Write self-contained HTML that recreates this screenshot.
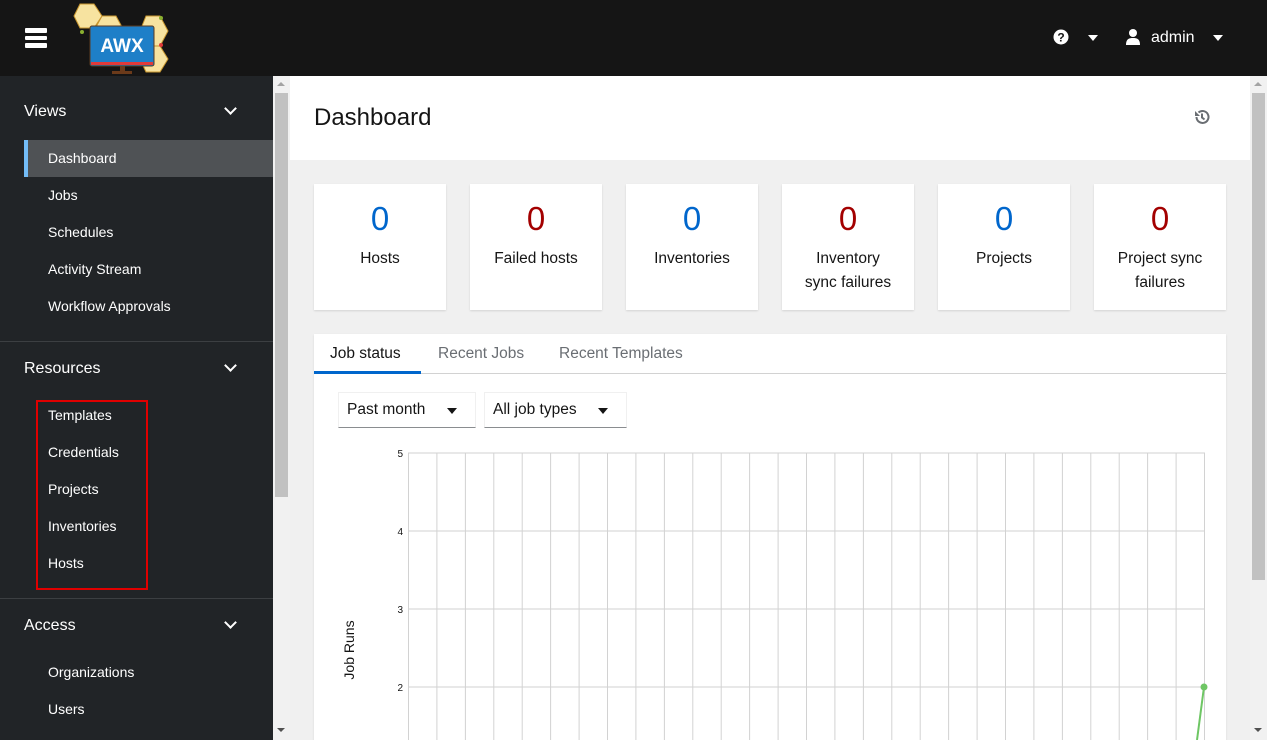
<!DOCTYPE html>
<html><head><meta charset="utf-8"><style>
*{box-sizing:border-box;margin:0;padding:0}
body{width:1267px;height:740px;overflow:hidden;font-family:"Liberation Sans",sans-serif;background:#f0f0f0;position:relative}
.a{position:absolute}
#hdr{left:0;top:0;width:1267px;height:76px;background:#151515}
#side{left:0;top:76px;width:273px;height:664px;background:#212427;color:#fff}
.sec{position:absolute;left:24px;font-size:16px;color:#fff}
.chev{position:absolute;left:226px;width:9px;height:9px;border-right:2.5px solid #fff;border-bottom:2.5px solid #fff;transform:rotate(45deg)}
.it{position:absolute;left:48px;font-size:14px;color:#fff}
.div{position:absolute;left:0;width:273px;height:1px;background:#3c3f42}
.card{position:absolute;top:184px;width:132px;height:126px;background:#fff;box-shadow:0 1px 2px rgba(0,0,0,.12);text-align:center}
.card .n{position:absolute;top:16px;left:0;width:100%;font-size:33px;font-weight:300}
.card .l{position:absolute;top:63px;left:0;width:100%;font-size:15.5px;color:#151515;line-height:24px}
.blue{color:#0066cc}.red{color:#a30000}
.sel{position:absolute;top:392px;height:36px;background:#fff;border:1px solid #f0f0f0;border-bottom:1px solid #8a8d90;font-size:15.5px;color:#151515;padding:8px 0 0 8px}
.tri{position:absolute;top:15px;width:0;height:0;border-left:5px solid transparent;border-right:5px solid transparent;border-top:6px solid #151515}
</style></head><body>
<div id="hdr" class="a">
  <div class="a" style="left:25px;top:28px;width:22px;height:4.5px;background:#fff;border-radius:1px"></div>
  <div class="a" style="left:25px;top:35.5px;width:22px;height:4.5px;background:#fff;border-radius:1px"></div>
  <div class="a" style="left:25px;top:43px;width:22px;height:4.5px;background:#fff;border-radius:1px"></div>
  <svg class="a" style="left:72px;top:2px" width="100" height="72" viewBox="0 0 100 72">
    <g fill="#f7e3a0" stroke="#c8962e" stroke-width="1">
      <polygon points="8,2 22,2 30,14 22,26 8,26 2,14"/>
      <polygon points="30,14 44,14 50,25 44,36 30,36 24,25"/>
      <polygon points="74,14 88,14 96,29 88,44 74,44 68,29"/>
      <polygon points="74,44 88,44 96,57 88,70 74,70 68,57"/>
    </g>
    <rect x="18" y="24" width="64" height="40" rx="2" fill="#1e7fc8" stroke="#5a3a20" stroke-width="1"/>
    <rect x="19" y="60" width="62" height="3" fill="#e03a3a"/>
    <rect x="48" y="64" width="5" height="5" fill="#6b3a1a"/><rect x="40" y="69" width="20" height="3" fill="#6b3a1a"/>
    <text x="50" y="50" text-anchor="middle" font-family="Liberation Sans" font-weight="bold" font-size="19" fill="#fff">AWX</text>
    <circle cx="89" cy="16" r="2" fill="#8ab030"/><circle cx="10" cy="30" r="2" fill="#8ab030"/><circle cx="89" cy="43" r="2" fill="#e03a3a"/>
  </svg>
  <svg class="a" style="left:1053px;top:29px" width="16" height="16" viewBox="0 0 16 16"><circle cx="8" cy="8" r="7.5" fill="#fff"/><text x="8" y="12.5" text-anchor="middle" font-size="12" font-weight="bold" fill="#151515" font-family="Liberation Sans">?</text></svg>
  <div class="a" style="left:1088px;top:35px;border-left:5px solid transparent;border-right:5px solid transparent;border-top:6px solid #fff"></div>
  <svg class="a" style="left:1126px;top:29px" width="14" height="16" viewBox="0 0 14 16"><circle cx="7" cy="4" r="4" fill="#fff"/><path d="M0 16 C0 10 3 9 7 9 C11 9 14 10 14 16Z" fill="#fff"/></svg>
  <div class="a" style="left:1151px;top:29px;font-size:16px;color:#fff">admin</div>
  <div class="a" style="left:1213px;top:35px;border-left:5px solid transparent;border-right:5px solid transparent;border-top:6px solid #fff"></div>
</div>
<div id="side" class="a">
  <div class="sec" style="top:27px">Views</div><div class="chev" style="top:28px"></div>
  <div class="a" style="left:24px;top:64px;width:249px;height:37px;background:#4f5255;border-left:4px solid #73bcf7"></div>
  <div class="it" style="top:74px">Dashboard</div>
  <div class="it" style="top:111px">Jobs</div>
  <div class="it" style="top:148px">Schedules</div>
  <div class="it" style="top:185px">Activity Stream</div>
  <div class="it" style="top:222px">Workflow Approvals</div>
  <div class="div" style="top:265px"></div>
  <div class="sec" style="top:284px">Resources</div><div class="chev" style="top:285px"></div>
  <div class="it" style="top:331px">Templates</div>
  <div class="it" style="top:368px">Credentials</div>
  <div class="it" style="top:405px">Projects</div>
  <div class="it" style="top:442px">Inventories</div>
  <div class="it" style="top:479px">Hosts</div>
  <div class="a" style="left:36px;top:324px;width:112px;height:190px;border:2px solid #e00000"></div>
  <div class="div" style="top:522px"></div>
  <div class="sec" style="top:541px">Access</div><div class="chev" style="top:542px"></div>
  <div class="it" style="top:588px">Organizations</div>
  <div class="it" style="top:625px">Users</div>
</div>
<div class="a" style="left:273px;top:76px;width:17px;height:664px;background:#f1f1f1"></div>
<div class="a" style="left:275px;top:93px;width:13px;height:404px;background:#c1c1c1"></div>
<div class="a" style="left:277px;top:82px;border-left:4px solid transparent;border-right:4px solid transparent;border-bottom:4px solid #a3a3a3"></div>
<div class="a" style="left:277px;top:728px;border-left:4px solid transparent;border-right:4px solid transparent;border-top:4px solid #505050"></div>
<div class="a" style="left:1250px;top:76px;width:17px;height:664px;background:#f1f1f1"></div>
<div class="a" style="left:1252px;top:93px;width:13px;height:487px;background:#c1c1c1"></div>
<div class="a" style="left:1254px;top:82px;border-left:4px solid transparent;border-right:4px solid transparent;border-bottom:4px solid #a3a3a3"></div>
<div class="a" style="left:1254px;top:728px;border-left:4px solid transparent;border-right:4px solid transparent;border-top:4px solid #505050"></div>

<div class="a" style="left:290px;top:76px;width:960px;height:84px;background:#fff"></div>
<div class="a" style="left:314px;top:104px;font-size:24px;color:#151515">Dashboard</div>
<svg class="a" style="left:1193px;top:108px" width="18" height="18" viewBox="0 0 18 18"><path d="M3.5 9 A6 6 0 1 0 5.5 4.5" fill="none" stroke="#6a6e73" stroke-width="2"/><path d="M2 3 L2 8 L7 8Z" fill="#6a6e73"/><path d="M9 5.5 V9.5 L11.5 11.5" fill="none" stroke="#6a6e73" stroke-width="2"/></svg>

<div class="card" style="left:314px"><div class="n blue">0</div><div class="l">Hosts</div></div>
<div class="card" style="left:470px"><div class="n red">0</div><div class="l">Failed hosts</div></div>
<div class="card" style="left:626px"><div class="n blue">0</div><div class="l">Inventories</div></div>
<div class="card" style="left:782px"><div class="n red">0</div><div class="l">Inventory<br>sync failures</div></div>
<div class="card" style="left:938px"><div class="n blue">0</div><div class="l">Projects</div></div>
<div class="card" style="left:1094px"><div class="n red">0</div><div class="l">Project sync<br>failures</div></div>

<div class="a" style="left:314px;top:334px;width:912px;height:406px;background:#fff;box-shadow:0 1px 2px rgba(0,0,0,.1)"></div>
<div class="a" style="left:314px;top:373px;width:912px;height:1px;background:#d2d2d2"></div>
<div class="a" style="left:314px;top:371px;width:107px;height:3px;background:#0066cc"></div>
<div class="a" style="left:330px;top:345px;font-size:15.5px;color:#151515">Job status</div>
<div class="a" style="left:438px;top:345px;font-size:15.5px;color:#6a6e73">Recent Jobs</div>
<div class="a" style="left:559px;top:345px;font-size:15.5px;color:#6a6e73">Recent Templates</div>
<div class="sel" style="left:338px;width:138px">Past month<div class="tri" style="left:108px"></div></div>
<div class="sel" style="left:484px;width:143px">All job types<div class="tri" style="left:113px"></div></div>

<svg class="a" style="left:314px;top:440px" width="912" height="300">
<g stroke="#d2d2d2" stroke-width="1">
<line x1="94" y1="13" x2="891" y2="13"/><line x1="94" y1="91" x2="891" y2="91"/><line x1="94" y1="169" x2="891" y2="169"/><line x1="94" y1="247" x2="891" y2="247"/>
<line x1="94.5" y1="13" x2="94.5" y2="300"/><line x1="122.9" y1="13" x2="122.9" y2="300"/><line x1="151.4" y1="13" x2="151.4" y2="300"/><line x1="179.8" y1="13" x2="179.8" y2="300"/><line x1="208.2" y1="13" x2="208.2" y2="300"/><line x1="236.6" y1="13" x2="236.6" y2="300"/><line x1="265.1" y1="13" x2="265.1" y2="300"/><line x1="293.5" y1="13" x2="293.5" y2="300"/><line x1="321.9" y1="13" x2="321.9" y2="300"/><line x1="350.4" y1="13" x2="350.4" y2="300"/><line x1="378.8" y1="13" x2="378.8" y2="300"/><line x1="407.2" y1="13" x2="407.2" y2="300"/><line x1="435.6" y1="13" x2="435.6" y2="300"/><line x1="464.1" y1="13" x2="464.1" y2="300"/><line x1="492.5" y1="13" x2="492.5" y2="300"/><line x1="520.9" y1="13" x2="520.9" y2="300"/><line x1="549.4" y1="13" x2="549.4" y2="300"/><line x1="577.8" y1="13" x2="577.8" y2="300"/><line x1="606.2" y1="13" x2="606.2" y2="300"/><line x1="634.6" y1="13" x2="634.6" y2="300"/><line x1="663.1" y1="13" x2="663.1" y2="300"/><line x1="691.5" y1="13" x2="691.5" y2="300"/><line x1="719.9" y1="13" x2="719.9" y2="300"/><line x1="748.4" y1="13" x2="748.4" y2="300"/><line x1="776.8" y1="13" x2="776.8" y2="300"/><line x1="805.2" y1="13" x2="805.2" y2="300"/><line x1="833.6" y1="13" x2="833.6" y2="300"/><line x1="862.1" y1="13" x2="862.1" y2="300"/><line x1="890.5" y1="13" x2="890.5" y2="300"/>
</g>
<g font-family="Liberation Sans" font-size="10" fill="#151515" text-anchor="end">
<text x="89" y="17">5</text><text x="89" y="95">4</text><text x="89" y="173">3</text><text x="89" y="251">2</text></g>
<text transform="translate(40,210) rotate(-90)" font-family="Liberation Sans" font-size="14" fill="#151515" text-anchor="middle">Job Runs</text>
<line x1="890" y1="247" x2="883" y2="300" stroke="#6ec664" stroke-width="2"/>
<circle cx="890" cy="247" r="3.5" fill="#6ec664"/>
</svg>
</body></html>
